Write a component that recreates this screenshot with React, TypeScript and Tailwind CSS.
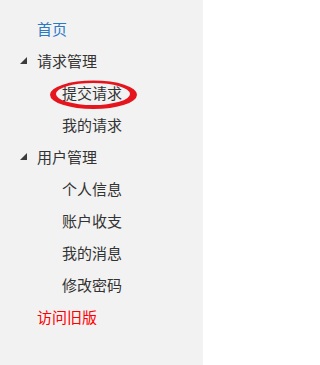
import React from "react";

const Tri = () => (
  <span className="flex w-[17px] shrink-0 items-center">
    <svg width="7" height="7" viewBox="0 0 7 7" className="block">
      <polygon points="7,0 7,7 0,7" fill="#3c3c3c" />
    </svg>
  </span>
);

export default function App() {
  const font = { fontFamily: '"Noto Sans CJK SC", "Noto Sans", sans-serif' };
  return (
    <div className="flex h-[365px] w-[208px] bg-white" style={font}>
      <aside className="flex h-full w-[203px] flex-col bg-[#f2f2f2] pt-3 text-[15px] leading-none text-[#333333]">
        <div className="flex h-8 items-center pl-[37px] text-[#2b78c4]">首页</div>
        <div className="flex h-8 items-center pl-[20px]">
          <Tri />
          <span>请求管理</span>
        </div>
        <div className="relative flex h-8 items-center pl-[62px]">
          <span>提交请求</span>
          <svg
            className="pointer-events-none absolute left-[46px] top-0"
            width="96"
            height="36"
            viewBox="0 0 96 36"
          >
            <path
              fillRule="evenodd"
              fill="#e6151d"
              d="M4,18.75 a43.5,14.25 0 1,0 87,0 a43.5,14.25 0 1,0 -87,0 Z M10,18 a37,11 0 1,0 74,0 a37,11 0 1,0 -74,0 Z"
            />
          </svg>
        </div>
        <div className="flex h-8 items-center pl-[62px]">我的请求</div>
        <div className="flex h-8 items-center pl-[20px]">
          <Tri />
          <span>用户管理</span>
        </div>
        <div className="flex h-8 items-center pl-[62px]">个人信息</div>
        <div className="flex h-8 items-center pl-[62px]">账户收支</div>
        <div className="flex h-8 items-center pl-[62px]">我的消息</div>
        <div className="flex h-8 items-center pl-[62px]">修改密码</div>
        <div className="flex h-8 items-center pl-[37px] text-[#ff0000]">访问旧版</div>
      </aside>
    </div>
  );
}
